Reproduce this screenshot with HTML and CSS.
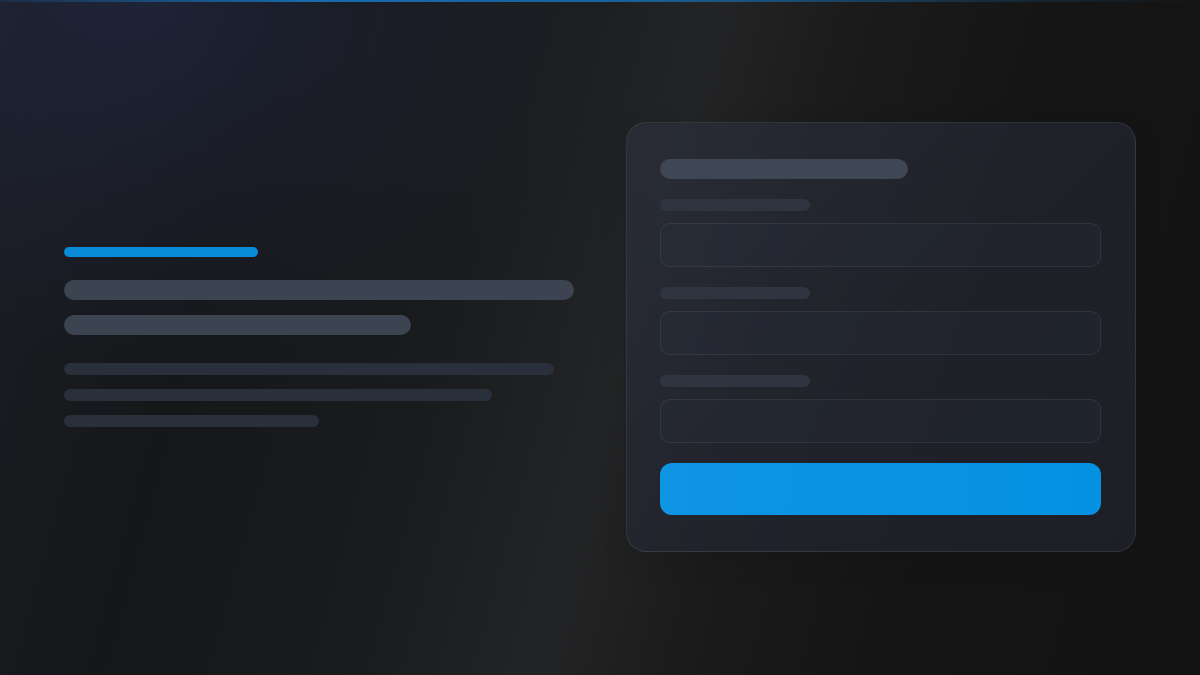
FILE: index.html
```html
<!DOCTYPE html>
<html lang="en">
<head>
<meta charset="utf-8">
<title>Sign in</title>
<link rel="stylesheet" href="styles.css">
</head>
<body>
<div class="page">
  <div class="top-glow"></div>
  <section class="intro">
    <div class="accent"></div>
    <div class="headings">
      <div class="bar heading heading-1"></div>
      <div class="bar heading heading-2"></div>
    </div>
    <div class="lines">
      <div class="bar line line-1"></div>
      <div class="bar line line-2"></div>
      <div class="bar line line-3"></div>
    </div>
  </section>
  <section class="card-wrap">
    <div class="card">
      <div class="bar card-title"></div>
      <div class="field">
        <div class="bar label"></div>
        <div class="input"></div>
      </div>
      <div class="field">
        <div class="bar label"></div>
        <div class="input"></div>
      </div>
      <div class="field">
        <div class="bar label"></div>
        <div class="input"></div>
      </div>
      <div class="button"></div>
    </div>
  </section>
</div>
</body>
</html>
```
FILE: styles.css
```css
* { box-sizing: border-box; }

html, body {
  margin: 0;
  padding: 0;
  font-family: "Inter", "Liberation Sans", sans-serif;
}

body {
  background: #141414;
}

.page {
  position: relative;
  width: 1200px;
  height: 675px;
  overflow: hidden;
  display: grid;
  grid-template-columns: 1fr 1fr;
  column-gap: 52px;
  align-items: center;
  padding: 0 64px 1px 64px;
  background:
    radial-gradient(ellipse 55% 75% at 12% 0%, rgba(34, 42, 74, 0.55), rgba(34, 42, 74, 0) 72%),
    linear-gradient(105deg, #1b1d24 0%, #161719 20%, #1a1b1d 38%, #232425 52%, #1b1b1c 62%, #151515 76%, #131313 100%);
}

.top-glow {
  position: absolute;
  left: 0;
  top: 0;
  width: 100%;
  height: 2px;
  background: linear-gradient(90deg, rgba(20, 110, 180, 0.15) 0%, rgba(22, 118, 190, 0.85) 25%, rgba(22, 118, 190, 0.8) 50%, rgba(22, 118, 190, 0.25) 80%, rgba(22, 118, 190, 0) 100%);
}

.bar { border-radius: 999px; }

/* left column */
.intro {
  display: flex;
  flex-direction: column;
}

.accent {
  width: 194px;
  height: 10px;
  border-radius: 5px;
  background: #0a8bd8;
  margin-bottom: 23px;
}

.headings {
  display: flex;
  flex-direction: column;
  gap: 15px;
  margin-bottom: 28px;
}

.heading {
  height: 20px;
  background: #3c4451;
}

.heading-1 { width: 100%; }
.heading-2 { width: 68%; }

.lines {
  display: flex;
  flex-direction: column;
  gap: 14px;
}

.line {
  height: 12px;
  background: #29303b;
}

.line-1 { width: 96%; }
.line-2 { width: 84%; }
.line-3 { width: 50%; }

/* right column */
.card-wrap {
  display: flex;
}

.card {
  width: 100%;
  display: flex;
  flex-direction: column;
  gap: 20px;
  padding: 36px 34px 36px 33px;
  border-radius: 20px;
  border: 1px solid rgba(255, 255, 255, 0.08);
  background: linear-gradient(135deg, rgba(44, 48, 60, 0.72) 0%, rgba(36, 39, 50, 0.72) 50%, rgba(33, 35, 46, 0.74) 100%);
  box-shadow: 0 10px 30px rgba(0, 0, 0, 0.08);
}

.card-title {
  width: 248px;
  height: 20px;
  background: #3f4754;
}

.field {
  display: flex;
  flex-direction: column;
  gap: 12px;
}

.label {
  width: 150px;
  height: 12px;
  background: #2e3440;
}

.input {
  height: 44px;
  border-radius: 10px;
  border: 1px solid rgba(255, 255, 255, 0.07);
  background: rgba(40, 52, 70, 0.22);
}

.button {
  height: 52px;
  border-radius: 12px;
  background: linear-gradient(90deg, #0e95e4 0%, #0591e2 100%);
}
```
